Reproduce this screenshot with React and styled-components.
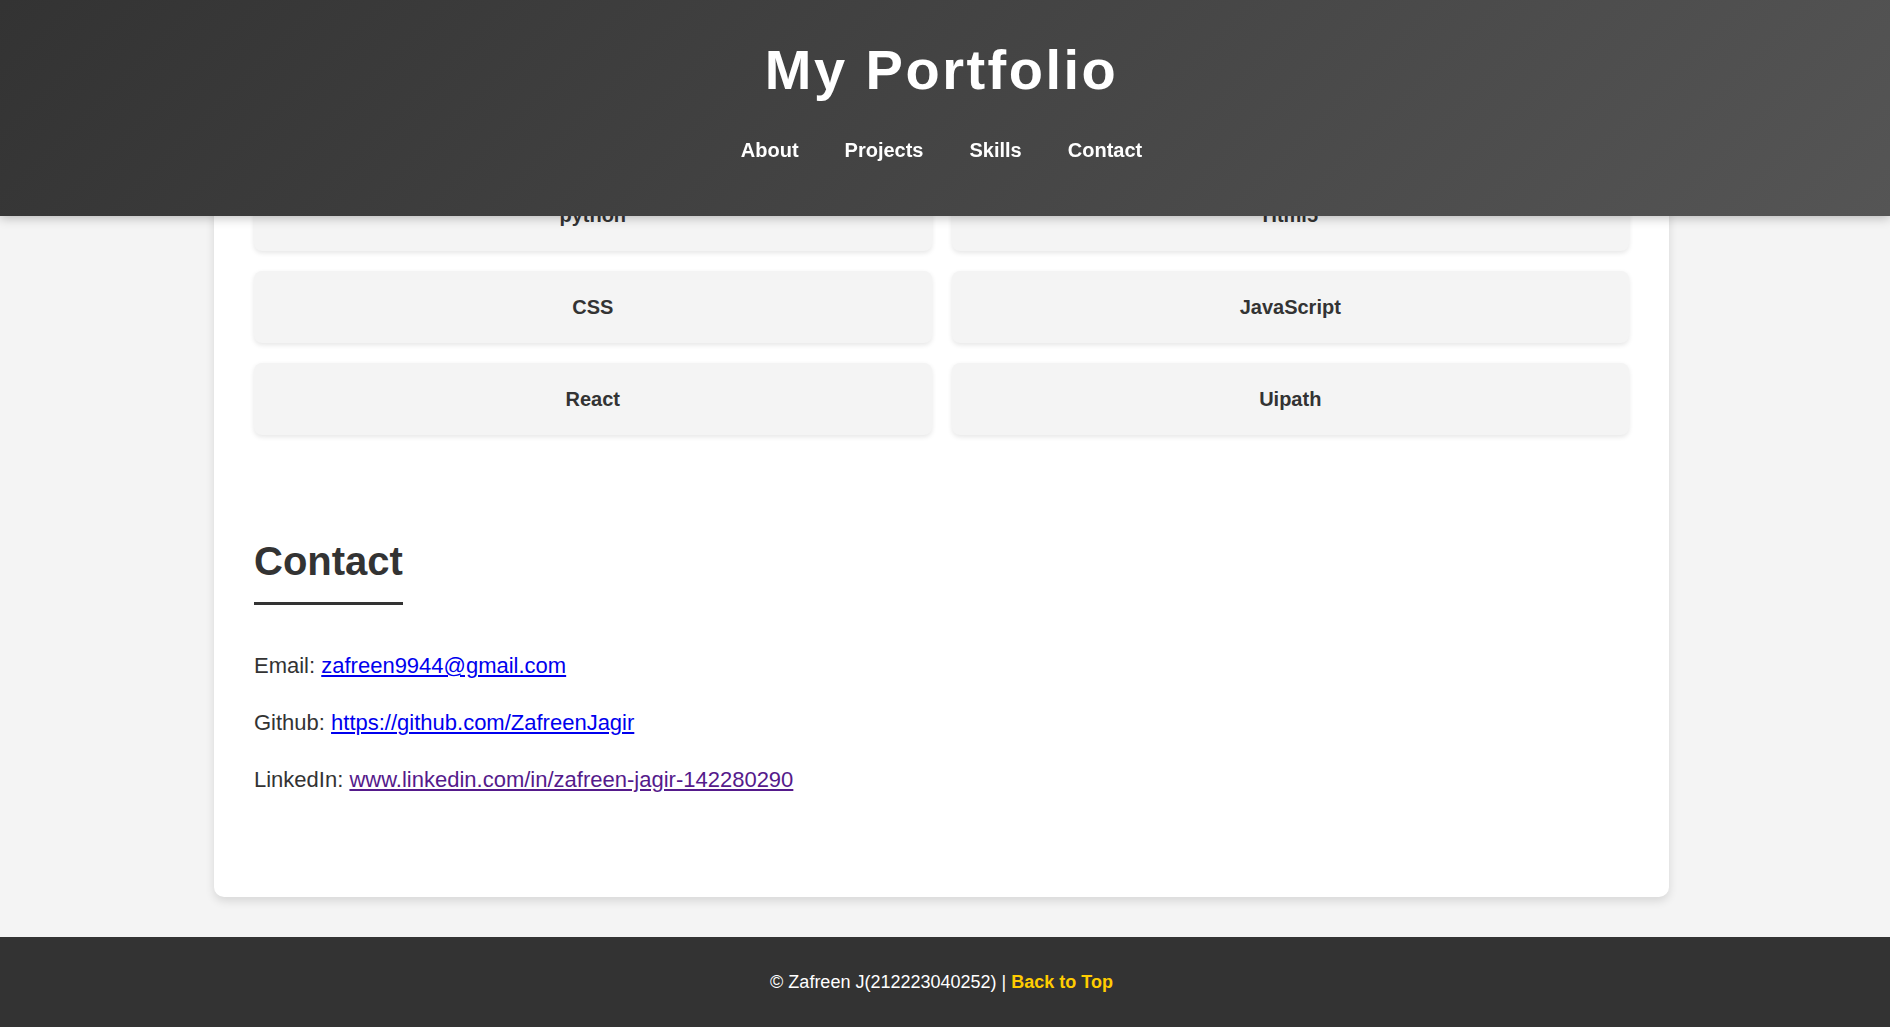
import React from "react";
import styled, { createGlobalStyle } from "styled-components";

const GlobalStyle = createGlobalStyle`
  html, body {
    margin: 0;
    padding: 0;
  }
  body {
    background: #f4f4f4;
    color: #333;
    font-family: "Liberation Sans", Arial, sans-serif;
  }
  * { box-sizing: border-box; }
`;

const Header = styled.header`
  position: fixed;
  top: 0;
  left: 0;
  right: 0;
  z-index: 10;
  height: 216px;
  padding: 38px 7px 0 0;
  background: linear-gradient(135deg, #333, #555);
  box-shadow: 0 2px 10px rgba(0, 0, 0, 0.25);
  display: flex;
  flex-direction: column;
  align-items: center;
  color: #fff;
`;

const Title = styled.h1`
  margin: 0 0 36px;
  font-size: 56px;
  line-height: 64px;
  font-weight: 700;
  letter-spacing: 2.5px;
`;

const Nav = styled.nav`
  display: flex;
  gap: 46px;
`;

const NavLink = styled.a`
  color: #fff;
  text-decoration: none;
  font-size: 20px;
  line-height: 24px;
  font-weight: 700;
`;

const Main = styled.main`
  padding: 139px 7px 40px 0;
`;

const Container = styled.div`
  width: 1455px;
  margin: 0 auto;
  background: #fff;
  border-radius: 10px;
  box-shadow: 0 4px 10px rgba(0, 0, 0, 0.12);
  padding: 40px 40px 40px;
`;

const SkillGrid = styled.div`
  display: grid;
  grid-template-columns: 1fr 1fr;
  gap: 20px;
`;

const SkillCard = styled.div`
  background: #f4f4f4;
  border-radius: 8px;
  box-shadow: 0 2px 5px rgba(0, 0, 0, 0.1);
  padding: 24px;
  text-align: center;
  font-size: 20px;
  line-height: 24px;
  font-weight: 700;
  color: #333;
`;

const Section = styled.section`
  display: flex;
  flex-direction: column;
  margin-top: 103px;
  padding-bottom: 60px;
`;

const SectionTitle = styled.h2`
  align-self: flex-start;
  margin: 0 0 43px;
  font-size: 40px;
  line-height: 46px;
  font-weight: 700;
  color: #333;
  padding-bottom: 18px;
  border-bottom: 3px solid #333;
`;

const ContactList = styled.div`
  display: flex;
  flex-direction: column;
  gap: 22px;
`;

const ContactLine = styled.p`
  margin: 0;
  font-size: 22px;
  line-height: 35px;
  color: #333;
`;

const ContactLink = styled.a`
  color: ${(p) => (p.$visited ? "#551a8b" : "#0000ee")};
  text-decoration: underline;
`;

const Footer = styled.footer`
  height: 90px;
  background: #333;
  color: #fff;
  display: flex;
  align-items: center;
  justify-content: center;
  padding-right: 7px;
  font-size: 18px;
  line-height: 28px;
`;

const TopLink = styled.a`
  color: #ffcc00;
  font-weight: 700;
  text-decoration: none;
`;

const skills = ["python", "Html5", "CSS", "JavaScript", "React", "Uipath"];

export default function App() {
  return (
    <>
      <GlobalStyle />
      <Header>
        <Title>My Portfolio</Title>
        <Nav>
          <NavLink href="#about">About</NavLink>
          <NavLink href="#projects">Projects</NavLink>
          <NavLink href="#skills">Skills</NavLink>
          <NavLink href="#contact">Contact</NavLink>
        </Nav>
      </Header>
      <Main>
        <Container>
          <SkillGrid>
            {skills.map((s) => (
              <SkillCard key={s}>{s}</SkillCard>
            ))}
          </SkillGrid>
          <Section id="contact">
            <SectionTitle>Contact</SectionTitle>
            <ContactList>
              <ContactLine>
                Email: <ContactLink href="#mail">zafreen9944@gmail.com</ContactLink>
              </ContactLine>
              <ContactLine>
                Github: <ContactLink href="#github">https://github.com/ZafreenJagir</ContactLink>
              </ContactLine>
              <ContactLine>
                LinkedIn:{" "}
                <ContactLink $visited href="#linkedin">
                  www.linkedin.com/in/zafreen-jagir-142280290
                </ContactLink>
              </ContactLine>
            </ContactList>
          </Section>
        </Container>
      </Main>
      <Footer>
        <span>
          © Zafreen J(212223040252) | <TopLink href="#top">Back to Top</TopLink>
        </span>
      </Footer>
    </>
  );
}
